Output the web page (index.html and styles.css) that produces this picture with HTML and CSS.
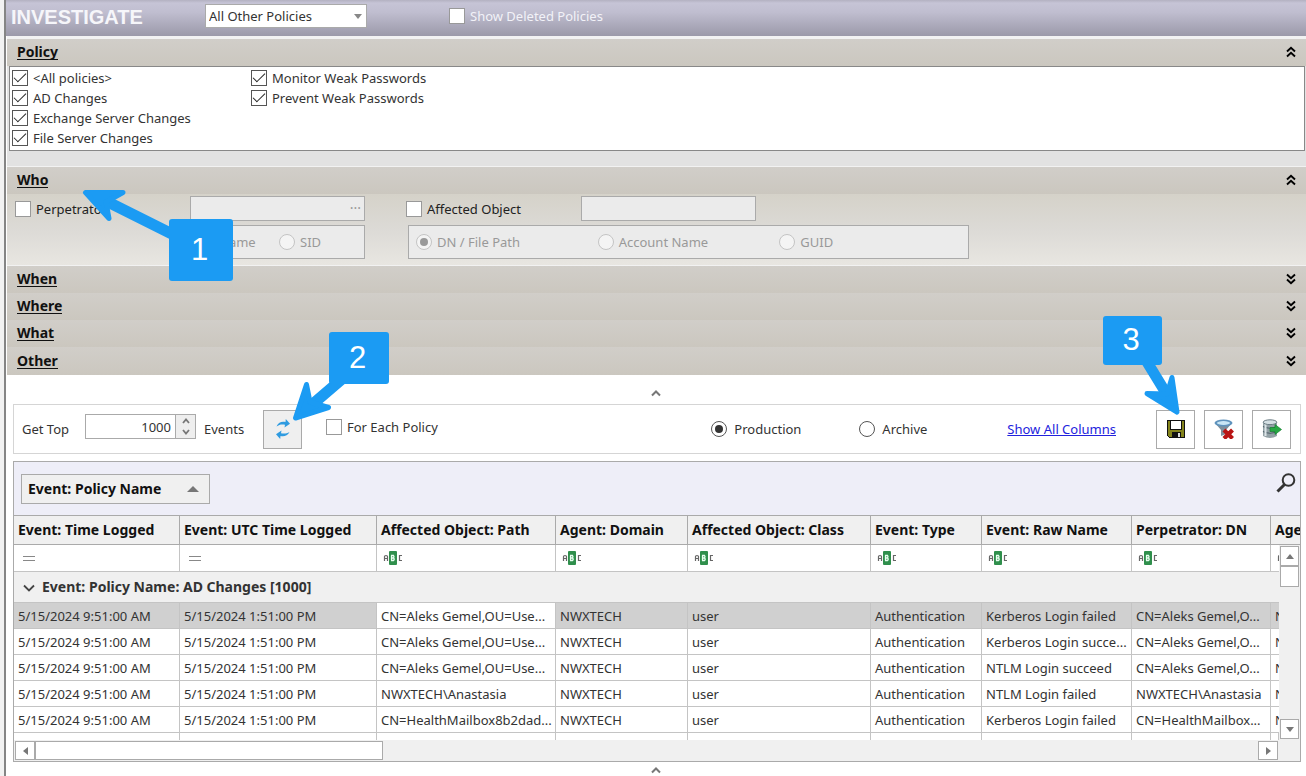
FILE: index.html
```html
<!DOCTYPE html>
<html lang="en">
<head>
<meta charset="utf-8">
<title>Investigate</title>
<link rel="stylesheet" href="styles.css">
</head>
<body>
<svg class="sprite" aria-hidden="true">
  <symbol id="chev-up" viewBox="0 0 10 12"><path d="M1 5.5 5 1.8 9 5.5M1 10.5 5 6.8 9 10.5" fill="none" stroke="#000" stroke-width="1.9"/></symbol>
  <symbol id="chev-down" viewBox="0 0 10 12"><path d="M1 1.5 5 5.2 9 1.5M1 6.5 5 10.2 9 6.5" fill="none" stroke="#000" stroke-width="1.9"/></symbol>
  <symbol id="caret" viewBox="0 0 10 8"><path d="M1 6.5 5 2.5 9 6.5" fill="none" stroke="#777" stroke-width="2"/></symbol>
  <symbol id="abc" viewBox="0 0 20 14">
    <path d="M1.500 10V5.500q0-1 1.500-1t1.500 1V10M1.500 7.500H4.500" fill="none" stroke="#666" stroke-width="1.200"/>
    <rect x="6" y="0" width="8" height="14" rx="1" fill="#2f8f4c"/>
    <path d="M8.500 4.500v5M8 4.500h2.500q1 1.200 0 2.500q1.400 1.200 0 2.500H8M8.500 7h2" fill="none" stroke="#e8fff0" stroke-width="1.300"/>
    <path d="M19 4.500H16.500V9.500H19" fill="none" stroke="#666" stroke-width="1.200"/>
  </symbol>
  <symbol id="tri-up" viewBox="0 0 8 5"><path d="M0 5 4 0 8 5z" fill="#777"/></symbol>
  <symbol id="tri-down" viewBox="0 0 8 5"><path d="M0 0H8L4 5z" fill="#777"/></symbol>
  <symbol id="tri-left" viewBox="0 0 5 8"><path d="M5 0V8L0 4z" fill="#777"/></symbol>
  <symbol id="tri-right" viewBox="0 0 5 8"><path d="M0 0V8L5 4z" fill="#777"/></symbol>
</svg>
<main class="window">
  <header class="titlebar">
    <h1>INVESTIGATE</h1>
    <div class="picker">
      <select class="policies" aria-label="Policy set"><option>All Other Policies</option></select>
      <svg class="picker-arrow" viewBox="0 0 8 5"><path d="M0 0H8L4 5z" fill="#888"/></svg>
    </div>
    <label class="check-label deleted"><input class="check" type="checkbox"><span>Show Deleted Policies</span></label>
  </header>

  <section class="panel">
    <button class="panel-head"><span>Policy</span><svg class="chev"><use href="#chev-up"/></svg></button>
    <div class="policy-list">
      <div class="policy-col">
        <label class="check-label"><input class="check" type="checkbox" checked><span>&lt;All policies&gt;</span></label>
        <label class="check-label"><input class="check" type="checkbox" checked><span>AD Changes</span></label>
        <label class="check-label"><input class="check" type="checkbox" checked><span>Exchange Server Changes</span></label>
        <label class="check-label"><input class="check" type="checkbox" checked><span>File Server Changes</span></label>
      </div>
      <div class="policy-col">
        <label class="check-label"><input class="check" type="checkbox" checked><span>Monitor Weak Passwords</span></label>
        <label class="check-label"><input class="check" type="checkbox" checked><span>Prevent Weak Passwords</span></label>
      </div>
    </div>
  </section>

  <section class="panel who">
    <button class="panel-head"><span>Who</span><svg class="chev"><use href="#chev-up"/></svg></button>
    <div class="who-body">
      <div class="who-group">
        <div class="who-line">
          <label class="check-label"><input class="check" type="checkbox"><span>Perpetrator</span></label>
          <div class="lookup"><input class="field" type="text" aria-label="Perpetrator" disabled><span class="dots">···</span></div>
        </div>
        <div class="radio-box perp-box">
          <label class="radio-label"><input class="radio" type="radio" name="perp" checked disabled><span>Name</span></label>
          <label class="radio-label"><input class="radio" type="radio" name="perp" disabled><span>SID</span></label>
        </div>
      </div>
      <div class="who-group wide">
        <div class="who-line">
          <label class="check-label"><input class="check" type="checkbox"><span>Affected Object</span></label>
          <div class="lookup"><input class="field" type="text" aria-label="Affected Object" disabled></div>
        </div>
        <div class="radio-box object-box">
          <label class="radio-label"><input class="radio" type="radio" name="obj" checked disabled><span>DN / File Path</span></label>
          <label class="radio-label"><input class="radio" type="radio" name="obj" disabled><span>Account Name</span></label>
          <label class="radio-label"><input class="radio" type="radio" name="obj" disabled><span>GUID</span></label>
        </div>
      </div>
    </div>
    <svg class="arrow arrow-1" viewBox="0 0 100 60"><path d="M20 14 92 50" stroke-width="11"/><path class="head" d="M3.500 7.500 41 7.500 24 17 27 33.500z" stroke-width="5"/></svg>
    <div class="callout callout-1">1</div>
  </section>

  <nav class="folded">
    <button class="panel-head"><span>When</span><svg class="chev"><use href="#chev-down"/></svg></button>
    <button class="panel-head"><span>Where</span><svg class="chev"><use href="#chev-down"/></svg></button>
    <button class="panel-head"><span>What</span><svg class="chev"><use href="#chev-down"/></svg></button>
    <button class="panel-head"><span>Other</span><svg class="chev"><use href="#chev-down"/></svg></button>
  </nav>

  <button class="splitter" aria-label="Collapse filters"><svg><use href="#caret"/></svg></button>

  <div class="toolbar">
    <label for="top">Get Top</label>
    <div class="spinner">
      <input id="top" type="text" value="1000">
      <div class="steps">
        <button aria-label="More"><svg viewBox="0 0 8 6"><path d="M1 5 4 1.500 7 5" fill="none" stroke="#777" stroke-width="1.800"/></svg></button>
        <button aria-label="Fewer"><svg viewBox="0 0 8 6"><path d="M1 1 4 4.500 7 1" fill="none" stroke="#777" stroke-width="1.800"/></svg></button>
      </div>
    </div>
    <span class="events">Events</span>
    <div class="tool">
      <button class="tool-btn grey" aria-label="Refresh">
        <svg viewBox="0 0 20 20"><path d="M3.500 7.500C5.500 3 9 2.200 12.500 3L12.800 0 17 4.700 11.500 8.500 12 5.800C9 5 6.500 5.300 3.500 7.500z" fill="#2f9be0"/><path d="M16.500 13C14.500 17 11 17.800 7.500 17L7.200 20 3 15.300 8.500 11.500 8 14.200C11 15 13.500 14.700 16.500 13z" fill="#2f9be0"/></svg>
      </button>
      <svg class="arrow arrow-2" viewBox="0 0 80 60"><path d="M16 44 58 8" stroke-width="11"/><path class="head" d="M4.500 53 15.500 19.500 19 37 37.500 42.500z" stroke-width="5"/></svg>
      <div class="callout callout-2">2</div>
    </div>
    <label class="check-label each"><input class="check" type="checkbox"><span>For Each Policy</span></label>
    <div class="sources">
      <label class="radio-label"><input class="radio" type="radio" name="source" checked><span>Production</span></label>
      <label class="radio-label"><input class="radio" type="radio" name="source"><span>Archive</span></label>
    </div>
    <a class="columns-link" href="#">Show All Columns</a>
    <div class="tools">
      <div class="tool">
        <button class="tool-btn" aria-label="Save">
          <svg viewBox="0 0 20 20" shape-rendering="crispEdges"><path d="M1 1H19V19H3L1 17z" fill="#111"/><path d="M2 2H4V11H16V2H18V18H15V13H6V18H3L2 17z" fill="#84841c"/><rect x="5" y="2" width="10" height="8" fill="#fff"/><rect x="12" y="14" width="2" height="4" fill="#ddd"/></svg>
        </button>
        <svg class="arrow arrow-3" viewBox="0 0 60 60"><path d="M20 2 42 38" stroke-width="11"/><path class="head" d="M50 52 45 17.500 40 34 20 33.500z" stroke-width="5"/></svg>
        <div class="callout callout-3">3</div>
      </div>
      <button class="tool-btn" aria-label="Clear filter">
        <svg viewBox="0 0 20 20"><path d="M1 4 7 11V17L12 15V11L18 4z" fill="#7d8f9c"/><ellipse cx="9.500" cy="4" rx="9" ry="3.500" fill="#5f93bd"/><ellipse cx="9.500" cy="4" rx="6.500" ry="1.900" fill="#c8e6f6"/><path d="M10 11 18.500 19.500M18.500 11 10 19.500" stroke="#b91414" stroke-width="4.200"/></svg>
      </button>
      <button class="tool-btn" aria-label="Export to database">
        <svg viewBox="0 0 20 20"><path d="M1 3V17Q8 21 15 17V3z" fill="#93a1a6"/><path d="M1 7.500Q8 11 15 7.500M1 12.500Q8 16 15 12.500" fill="none" stroke="#4d5f68" stroke-width="1.200"/><path d="M3.500 5V17" stroke="#dce5e8" stroke-width="2"/><ellipse cx="8" cy="3.200" rx="6.800" ry="2.400" fill="#d5e0e4" stroke="#6b7c84"/><path d="M8 8.500H13V5.500L19.500 10.500 13 15.500V12.500H8z" fill="#27a844" stroke="#158030" stroke-width=".7"/></svg>
      </button>
    </div>
  </div>

  <section class="grid">
    <div class="group-area">
      <button class="group-chip"><span>Event: Policy Name</span><svg viewBox="0 0 12 6"><path d="M0 6 6 0 12 6z" fill="#777"/></svg></button>
      <button class="search" aria-label="Search"><svg viewBox="0 0 20 20"><circle cx="12.500" cy="7" r="5.800" fill="none" stroke="#333" stroke-width="2"/><path d="M8.500 11.500 1.500 18.500" stroke="#333" stroke-width="3"/></svg></button>
    </div>
    <div class="viewport">
      <table>
        <colgroup><col class="c-time"><col class="c-utc"><col class="c-path"><col class="c-domain"><col class="c-class"><col class="c-type"><col class="c-raw"><col class="c-dn"><col class="c-last"><col class="c-scroll"></colgroup>
        <thead>
          <tr><th>Event: Time Logged</th><th>Event: UTC Time Logged</th><th>Affected Object: Path</th><th>Agent: Domain</th><th>Affected Object: Class</th><th>Event: Type</th><th>Event: Raw Name</th><th>Perpetrator: DN</th><th colspan="2">Age</th></tr>
        </thead>
        <tbody>
          <tr class="filters"><td><i class="equals"></i></td><td><i class="equals"></i></td><td><svg><use href="#abc"/></svg></td><td><svg><use href="#abc"/></svg></td><td><svg><use href="#abc"/></svg></td><td><svg><use href="#abc"/></svg></td><td><svg><use href="#abc"/></svg></td><td><svg><use href="#abc"/></svg></td><td class="cut"><svg><use href="#abc"/></svg></td><td></td></tr>
          <tr class="group"><td colspan="10"><svg viewBox="0 0 12 8"><path d="M1 1.500 6 6.500 11 1.500" fill="none" stroke="#444" stroke-width="1.800"/></svg>Event: Policy Name: AD Changes [1000]</td></tr>
          <tr class="selected"><td>5/15/2024 9:51:00 AM</td><td>5/15/2024 1:51:00 PM</td><td class="focus">CN=Aleks Gemel,OU=Use...</td><td>NWXTECH</td><td>user</td><td>Authentication</td><td>Kerberos Login failed</td><td>CN=Aleks Gemel,O...</td><td class="cut">N</td><td></td></tr>
          <tr><td>5/15/2024 9:51:00 AM</td><td>5/15/2024 1:51:00 PM</td><td>CN=Aleks Gemel,OU=Use...</td><td>NWXTECH</td><td>user</td><td>Authentication</td><td>Kerberos Login succe...</td><td>CN=Aleks Gemel,O...</td><td class="cut">N</td><td></td></tr>
          <tr><td>5/15/2024 9:51:00 AM</td><td>5/15/2024 1:51:00 PM</td><td>CN=Aleks Gemel,OU=Use...</td><td>NWXTECH</td><td>user</td><td>Authentication</td><td>NTLM Login succeed</td><td>CN=Aleks Gemel,O...</td><td class="cut">N</td><td></td></tr>
          <tr><td>5/15/2024 9:51:00 AM</td><td>5/15/2024 1:51:00 PM</td><td>NWXTECH\Anastasia</td><td>NWXTECH</td><td>user</td><td>Authentication</td><td>NTLM Login failed</td><td>NWXTECH\Anastasia</td><td class="cut">N</td><td></td></tr>
          <tr><td>5/15/2024 9:51:00 AM</td><td>5/15/2024 1:51:00 PM</td><td>CN=HealthMailbox8b2dad...</td><td>NWXTECH</td><td>user</td><td>Authentication</td><td>Kerberos Login failed</td><td>CN=HealthMailbox...</td><td class="cut">N</td><td></td></tr>
          <tr><td></td><td></td><td></td><td></td><td></td><td></td><td></td><td></td><td></td><td></td></tr>
        </tbody>
      </table>
      <div class="vscroll">
        <button aria-label="Scroll up"><svg class="tri"><use href="#tri-up"/></svg></button>
        <div class="thumb"></div>
        <button class="end" aria-label="Scroll down"><svg class="tri"><use href="#tri-down"/></svg></button>
      </div>
    </div>
    <div class="hscroll">
      <button aria-label="Scroll left"><svg class="tri side"><use href="#tri-left"/></svg></button>
      <div class="thumb"></div>
      <button class="end" aria-label="Scroll right"><svg class="tri side"><use href="#tri-right"/></svg></button>
    </div>
  </section>
  <button class="splitter bottom" aria-label="Expand details"><svg><use href="#caret"/></svg></button>
</main>
</body>
</html>
```
FILE: styles.css
```css
* { box-sizing: border-box; }
body {
  margin: 0;
  height: 100vh;
  overflow: hidden;
  background: #f2f2f2;
  font: 14px/20px "Noto Sans", sans-serif;
  color: #333;
}
button, input, select { font: inherit; color: inherit; }
button { padding: 0; margin: 0; border: 0; background: none; }
svg { display: block; flex: none; }
.sprite { position: absolute; width: 0; height: 0; }

.window {
  display: flex;
  flex-direction: column;
  min-height: 100vh;
  margin-left: 4px;
  border-left: 2px solid #858585;
  background: #fff;
}

/* Title bar */
.titlebar {
  display: flex;
  align-items: center;
  height: 36px;
  padding: 0 6px 4px 5px;
  background: linear-gradient(#b3b1c1, #c6c4d6 3px, #c0bed0 12px, #9b99a9);
}
h1 { width: 194px; margin: 0; padding-top: 2px; font: bold 20px/24px "Liberation Sans", sans-serif; color: #f6f6fa; }
.picker { position: relative; width: 162px; height: 24px; }
.policies {
  appearance: none;
  width: 100%;
  height: 24px;
  padding: 0 3px;
  border: 1px solid #aaa;
  border-radius: 0;
  background: #fff;
  font-size: 13px;
}
.picker-arrow { position: absolute; right: 5px; top: 10px; width: 8px; height: 5px; }
.deleted { margin-left: 82px; color: #f2f2f8; font-size: 13px; }

/* Checks and radios */
.check-label, .radio-label { display: flex; align-items: center; gap: 5px; white-space: nowrap; }
.check {
  appearance: none;
  display: grid;
  place-items: center;
  width: 16px;
  height: 16px;
  margin: 0;
  border: 1px solid #999;
  background: #fff;
}
.check:checked { border-color: #555; }
.check:checked::after {
  content: "";
  width: 11px;
  height: 5px;
  margin-bottom: 4px;
  border: solid #222;
  border-width: 0 0 1px 1px;
  rotate: -45deg;
}
.radio {
  appearance: none;
  display: grid;
  place-items: center;
  width: 16px;
  height: 16px;
  margin: 0;
  border: 1px solid #555;
  border-radius: 50%;
  background: #fff;
}
.radio:checked::after { content: ""; width: 8px; height: 8px; border-radius: 50%; background: #333; }
.radio:disabled { border-color: #c4c4c4; background: #f4f4f4; }
.radio:disabled:checked::after { background: #999; }

/* Filter panels */
.panel, .folded { margin-left: 1px; }
.panel { position: relative; padding: 3px 0 15px; background: linear-gradient(#f2f2f2 3px, #e2e2e2 3px); }
.panel-head {
  display: flex;
  align-items: center;
  justify-content: space-between;
  width: 100%;
  height: 27px;
  padding: 0 10px 1px;
  background: linear-gradient(#d1cec9, #cbc7bf);
  font-weight: bold;
  color: #111;
}
.panel-head span { border-bottom: 1px solid #111; line-height: 15px; }
.chev { width: 10px; height: 12px; }
.policy-list { display: flex; min-height: 85px; margin: 0 1px 0 2px; padding: 1px 2px; border: 1px solid #888; background: #fff; }
.policy-col { width: 239px; font-size: 13px; }

.who { padding: 0; border-top: 1px solid #f2f2f2; }
.who-body {
  display: flex;
  gap: 41px;
  min-height: 71px;
  padding: 2px 8px 6px;
  background: linear-gradient(#d5d2c9, #dcdad6 50%, #e8e6e1);
}
.who-group { display: flex; flex-direction: column; gap: 4px; width: 350px; }
.who-group.wide { width: 562px; }
.who-line { display: flex; align-items: center; }
.who-line .check-label { width: 175px; color: #222; font-size: 13px; }
.lookup { position: relative; width: 175px; height: 25px; }
.field { display: block; width: 100%; height: 25px; padding: 0 20px 0 4px; border: 1px solid #aaa; background: #ebebeb; }
.dots { position: absolute; right: 4px; top: 2px; color: #999; }
.radio-box {
  display: flex;
  height: 34px;
  padding: 0 7px;
  border: 1px solid #aaa;
  background: #ebebeb;
  color: #999;
  font-size: 13px;
}
.perp-box { width: 175px; margin-left: 175px; }
.perp-box .radio-label:first-child { width: 81px; }
.object-box { width: 561px; margin-left: 2px; }
.object-box .radio-label { width: 183px; }
.folded { border-top: 1px solid #f2f2f2; }
.folded .panel-head { height: 28px; }
.folded .panel-head:first-child { height: 27px; }
.folded .panel-head:nth-child(2) { height: 27px; }
.folded .panel-head:nth-child(3) { height: 27px; }

.splitter { display: grid; place-items: center; width: 100%; height: 29px; padding-top: 6px; }
.splitter svg { width: 10px; height: 8px; }
.splitter.bottom { height: 14px; padding-top: 2px; }

/* Toolbar */
.toolbar {
  display: flex;
  align-items: center;
  min-height: 50px;
  margin: 0 5px 7px 7px;
  padding: 0 9px 0 8px;
  border: 1px solid #d5d5d5;
  font-size: 13px;
}
.toolbar > label:first-child { width: 63px; }
.spinner { display: flex; width: 111px; height: 25px; margin-bottom: 5px; border: 1px solid #aaa; }
.spinner input { flex: 1; min-width: 0; padding: 0 4px; border: 0; text-align: right; background: #fff; }
.steps { display: flex; flex-direction: column; width: 20px; border-left: 1px solid #aaa; background: #eee; }
.steps button { flex: 1; display: grid; place-items: center; }
.steps svg { width: 8px; height: 6px; }
.events { width: 67px; padding-left: 8px; }
.tool { position: relative; }
.tool-btn { display: grid; place-items: center; width: 39px; height: 39px; border: 1px solid #aaa; background: #fff; }
.tool-btn.grey { background: #efefef; }
.tool-btn svg { width: 20px; height: 20px; }
.each { margin: 0 0 4px 24px; }
.sources { display: flex; margin-left: auto; }
.sources .radio-label { width: 148px; gap: 7px; }
.columns-link { margin-right: 40px; color: #22d; }
.tools { display: flex; gap: 9px; }

/* Callouts */
.callout {
  position: absolute;
  z-index: 3;
  display: grid;
  place-items: center;
  padding-right: 3px;
  border-radius: 3px;
  background: #1b9bf3;
  color: #fff;
  font: 31px/36px "Liberation Sans", sans-serif;
}
.arrow { position: absolute; z-index: 2; fill: none; stroke: #1b9bf3; stroke-linecap: round; stroke-linejoin: round; pointer-events: none; }
.arrow .head { fill: #1b9bf3; }
.callout-1 { left: 162px; top: 52px; width: 64px; height: 62px; }
.arrow-1 { left: 75px; top: 18px; width: 100px; height: 60px; }
.callout-2 { left: 66px; top: -78px; width: 60px; height: 52px; }
.arrow-2 { left: 28px; top: -45px; width: 80px; height: 60px; }
.callout-3 { left: -53px; top: -94px; width: 59px; height: 49px; }
.arrow-3 { left: -29px; top: -50px; width: 60px; height: 60px; }

/* Data grid */
.grid { margin: 0 5px 0 7px; border: 1px solid #aaa; background: #f0f0f0; }
.group-area { display: flex; align-items: center; justify-content: space-between; height: 53px; padding: 0 4px 0 7px; background: #eeeef8; }
.group-chip {
  display: flex;
  align-items: center;
  justify-content: space-between;
  width: 189px;
  height: 30px;
  padding: 0 10px 0 6px;
  border: 1px solid #aaa;
  background: #f0f0f0;
  font-weight: bold;
  color: #111;
}
.group-chip svg { width: 12px; height: 6px; }
.search { margin-bottom: 12px; }
.search svg { width: 20px; height: 20px; }
.viewport { position: relative; height: 225px; overflow: hidden; }
table { width: 100%; table-layout: fixed; border-collapse: separate; border-spacing: 0; font-size: 13px; background: #fff; }
.c-time { width: 166px; }
.c-utc { width: 197px; }
.c-path { width: 179px; }
.c-domain { width: 132px; }
.c-class { width: 183px; }
.c-type { width: 111px; }
.c-raw { width: 150px; }
.c-dn { width: 139px; }
.c-scroll { width: 21px; }
th, td {
  height: 26px;
  padding: 0 0 0 4px;
  border: solid #c4c4c4;
  border-width: 0 1px 1px 0;
  overflow: hidden;
  white-space: nowrap;
  text-align: left;
}
th { height: 30px; border-color: #aaa; border-top: 1px solid #aaa; background: #f0f0f0; color: #111; font-size: 14px; }
th:last-child { border-right: 0; }
td.cut { border-right: 0; }
.filters td { height: 27px; padding-left: 6px; }
.filters svg { width: 20px; height: 14px; }
.equals { display: block; width: 12px; height: 5px; margin-left: 3px; border: solid #888; border-width: 1px 0; }
.group td { height: 31px; padding-left: 9px; background: #f0f0f0; font-weight: bold; font-size: 14px; }
.group svg { display: inline-block; width: 12px; height: 8px; margin-right: 7px; }
.selected td { background: #d0d0d0; }
.selected .focus { background: #fff; }
.vscroll {
  position: absolute;
  top: 30px;
  right: 0;
  bottom: 0;
  display: flex;
  flex-direction: column;
  width: 21px;
  padding: 1px;
  background: #f0f0f0;
}
.vscroll button, .hscroll button { display: grid; place-items: center; width: 19px; height: 20px; border: 1px solid #aaa; background: #fff; }
.thumb { border: 1px solid #aaa; background: #fff; }
.vscroll .thumb { height: 21px; }
.vscroll .end { margin-top: auto; }
.hscroll { display: flex; height: 21px; padding: 1px 22px 1px 1px; }
.hscroll .thumb { width: 348px; }
.hscroll button { height: 19px; width: 20px; }
.hscroll .end { margin-left: auto; }
.tri { width: 8px; height: 5px; }
.tri.side { width: 5px; height: 8px; }
```
